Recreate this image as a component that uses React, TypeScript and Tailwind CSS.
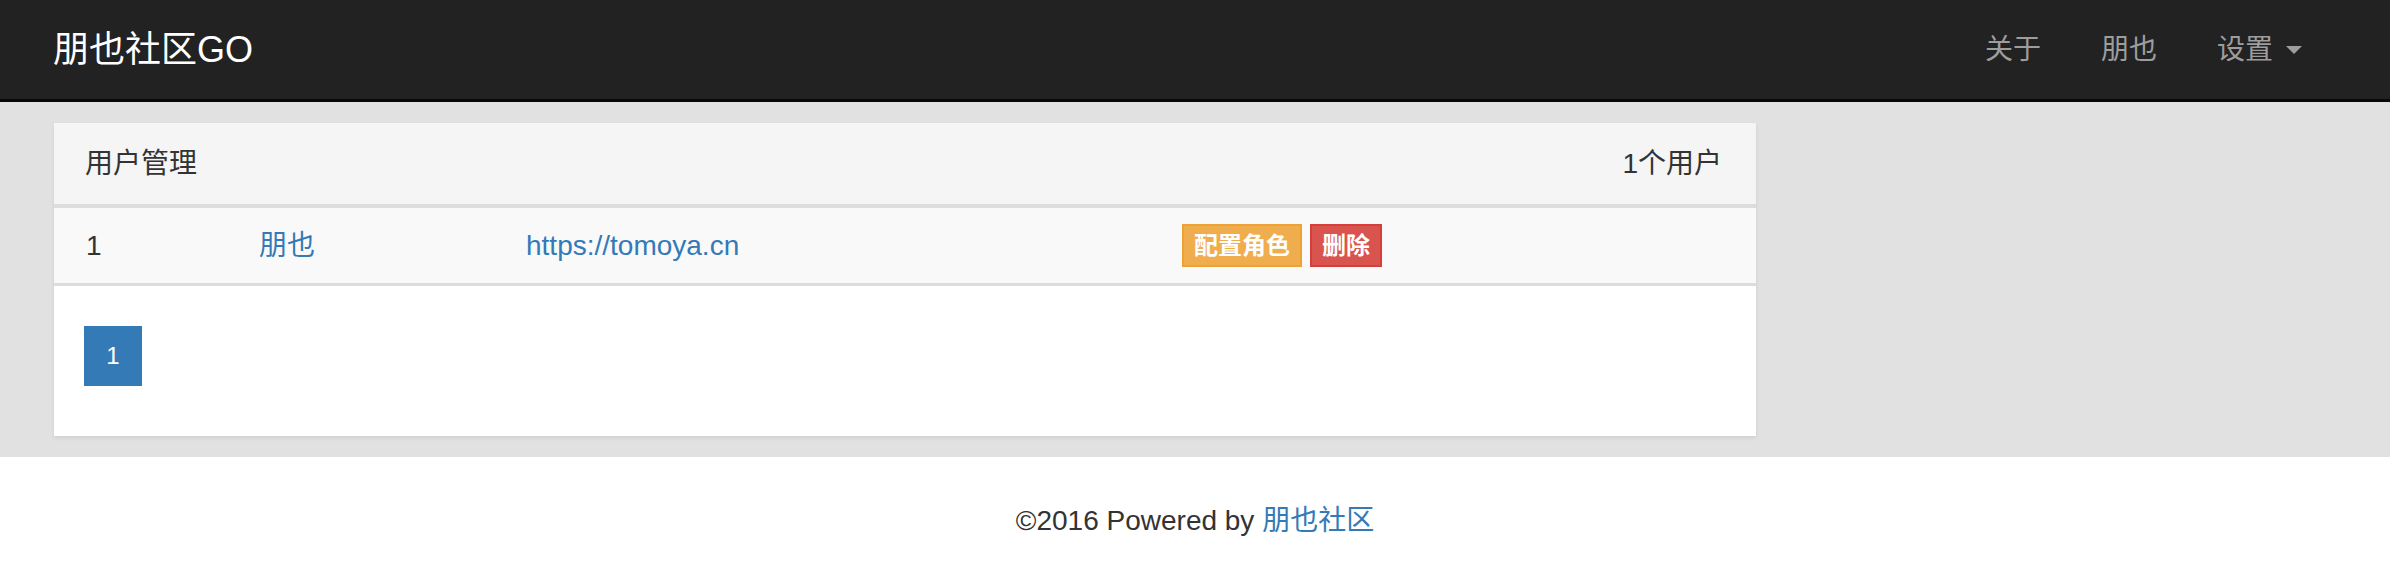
import React from 'react';

const font = { fontFamily: '"Liberation Sans", "Noto Sans CJK SC", sans-serif' };

const Navbar = () => (
  <div className="flex h-[102px] items-center justify-between border-b-[3px] border-[#080808] bg-[#222222] pl-[53px] pr-[88px]">
    <a className="text-[36px] leading-none text-white">朋也社区GO</a>
    <div className="flex items-center gap-[60px] text-[28px] leading-none text-[#9d9d9d]">
      <a>关于</a>
      <a>朋也</a>
      <a className="flex items-center gap-[13px]">
        设置
        <span className="h-0 w-0 border-x-[8px] border-t-[8px] border-x-transparent border-t-[#9d9d9d]" />
      </a>
    </div>
  </div>
);

const UserPanel = () => (
  <div className="w-[1702px] bg-white shadow-[0_2px_4px_rgba(0,0,0,0.08)]">
    {/* en-tête */}
    <div className="flex h-[85px] items-center justify-between border-b-[4px] border-[#dddddd] bg-[#f5f5f5] pl-[31px] pr-[34px] text-[28px] text-[#333333]">
      <span>用户管理</span>
      <span>1个用户</span>
    </div>
    {/* ligne utilisateur */}
    <div className="flex h-[78px] items-center border-b-[3px] border-[#dddddd] bg-[#f9f9f9] text-[28px]">
      <div className="w-[205px] pl-[32px] text-[#333333]">1</div>
      <div className="w-[267px] text-[#337ab7]">朋也</div>
      <div className="w-[656px] text-[#337ab7]">https://tomoya.cn</div>
      <div className="flex items-center gap-[8px]">
        <span className="flex h-[43px] w-[120px] items-center justify-center border-2 border-[#eea236] bg-[#f0ad4e] text-[24px] font-bold text-white">
          配置角色
        </span>
        <span className="flex h-[43px] w-[72px] items-center justify-center border-2 border-[#d43f3a] bg-[#d9534f] text-[24px] font-bold text-white">
          删除
        </span>
      </div>
    </div>
    {/* pagination */}
    <div className="pb-[50px] pl-[30px] pt-[40px]">
      <span className="flex h-[60px] w-[58px] items-center justify-center bg-[#337ab7] text-[24px] text-white">1</span>
    </div>
  </div>
);

const App: React.FC = () => {
  return (
    <div style={font} className="min-h-[584px] bg-white">
      <Navbar />
      <div className="bg-[#e1e1e1] pb-[21px] pl-[54px] pt-[21px]">
        <UserPanel />
      </div>
      <div className="flex h-[127px] items-center justify-center text-[28px] text-[#333333]">
        <span>
          ©2016 Powered by <a className="text-[#337ab7]">朋也社区</a>
        </span>
      </div>
    </div>
  );
};

export default App;
